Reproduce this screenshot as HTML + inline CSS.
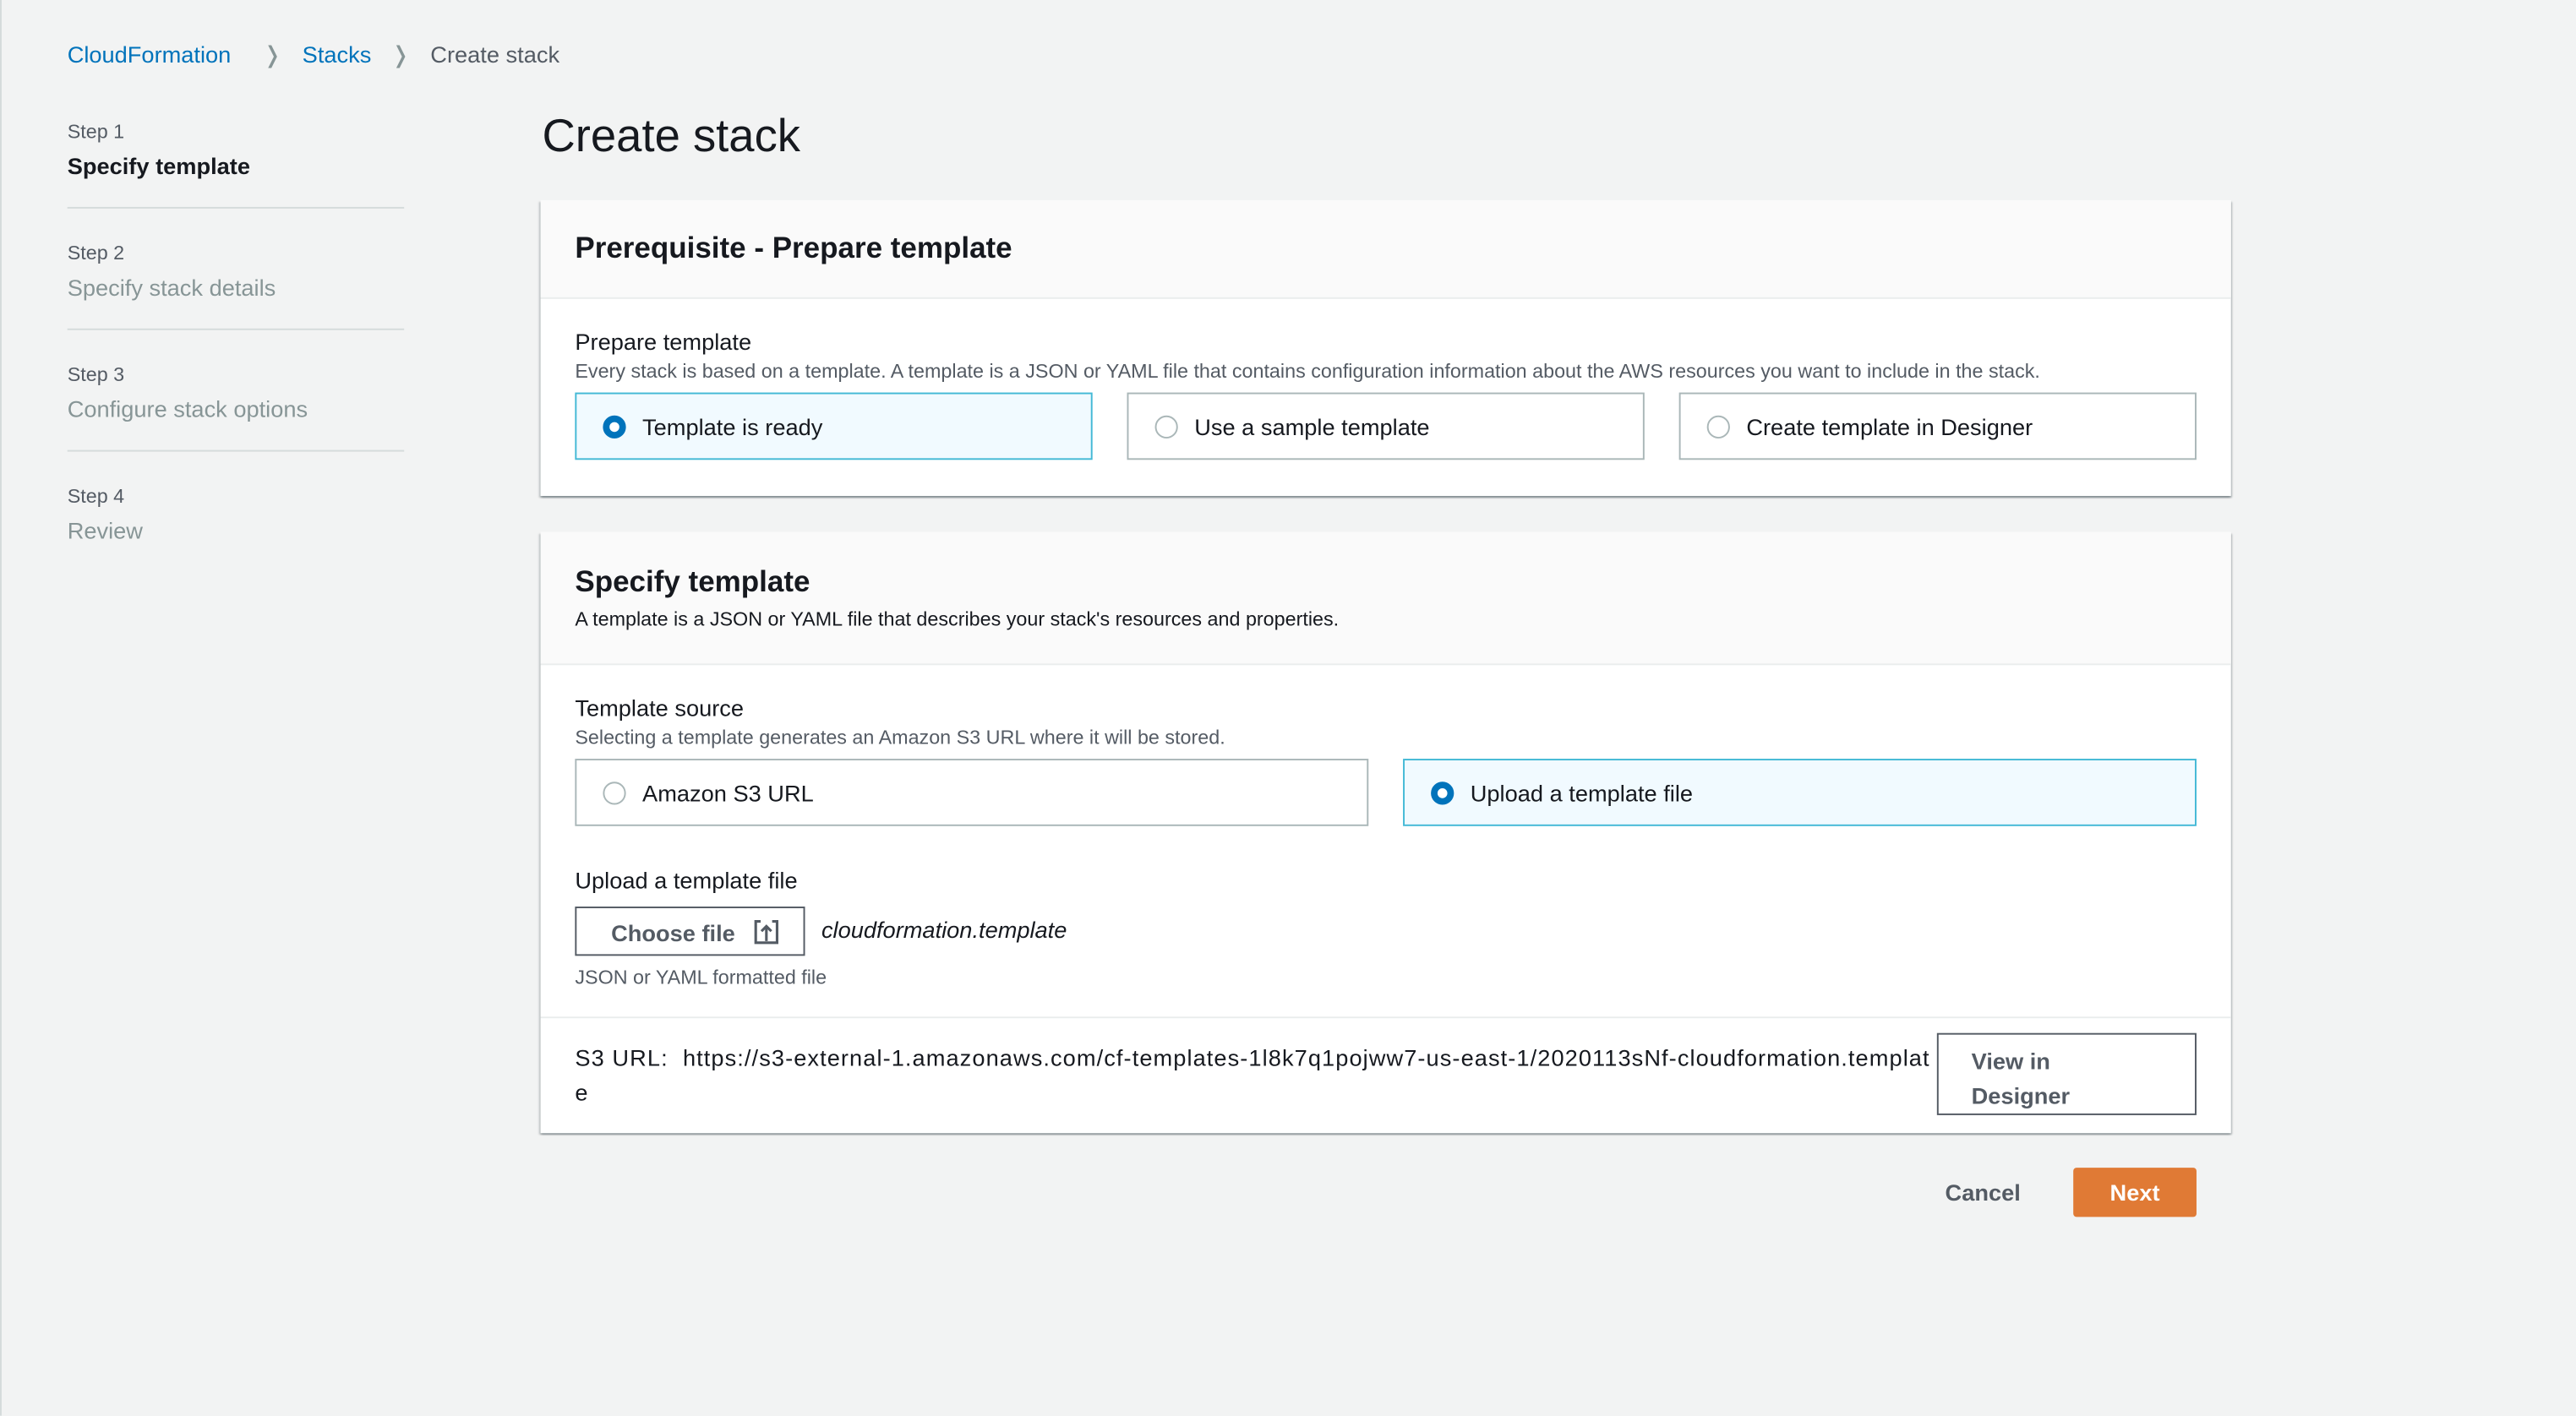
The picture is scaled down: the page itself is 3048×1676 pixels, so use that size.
<!DOCTYPE html>
<html><head><meta charset="utf-8"><style>
html,body{margin:0;padding:0;width:3048px;height:1674px;overflow:hidden;background:#f2f3f3}
#w{position:absolute;left:0;top:0;width:1568px;height:862px;transform:scale(1.94388);transform-origin:0 0;font-family:"Liberation Sans",sans-serif;color:#16191f}
#lb{position:absolute;left:0;top:0;width:1px;height:862px;background:#d5dbdb}
.a{position:absolute;white-space:nowrap}
.bc{font-size:14px;top:25px}
.blue{color:#0073bb}
.sl{font-size:12px;color:#545b64;left:41px}
.sn{font-size:14px;color:#879596;left:41px}
.dv{position:absolute;left:41px;width:205px;height:1px;background:#d5dbdb}
.panel{position:absolute;left:329px;width:1029px;background:#fff;box-shadow:0 1px 1px 0 rgba(0,28,36,.3),1px 1px 1px 0 rgba(0,28,36,.15),-1px 1px 1px 0 rgba(0,28,36,.15)}
.hd{position:absolute;left:0;top:0;width:100%;background:#fafafa;border-bottom:1px solid #eaeded}
.tile{position:absolute;height:41px;border:1px solid #aab7b8;box-sizing:border-box;font-size:14px}
.tile.on{border-color:#44b9d6;background:#f1faff}
.tile span{position:absolute;left:40px;top:12px}
.rd{position:absolute;left:16px;top:13px;width:14px;height:14px;border-radius:50%;border:1px solid #aab7b8;box-sizing:border-box;background:#fff}
.on .rd{border:4px solid #0073bb}
.btn{position:absolute;border:1px solid #545b64;box-sizing:border-box;font-weight:bold;color:#545b64;font-size:14px;background:#fff}
</style></head><body><div id="w">
<div id="lb"></div>
<div class="a bc blue" style="left:41px">CloudFormation</div>
<div class="a bc" style="left:160px;color:#879596">&#x276D;</div>
<div class="a bc blue" style="left:184px">Stacks</div>
<div class="a bc" style="left:238px;color:#879596">&#x276D;</div>
<div class="a bc" style="left:262px;color:#545b64">Create stack</div>

<div class="a sl" style="top:73px">Step 1</div>
<div class="a" style="left:41px;top:93px;font-size:14px;font-weight:bold">Specify template</div>
<div class="dv" style="top:126px"></div>
<div class="a sl" style="top:147px">Step 2</div>
<div class="a sn" style="top:167px">Specify stack details</div>
<div class="dv" style="top:200px"></div>
<div class="a sl" style="top:221px">Step 3</div>
<div class="a sn" style="top:241px">Configure stack options</div>
<div class="dv" style="top:274px"></div>
<div class="a sl" style="top:295px">Step 4</div>
<div class="a sn" style="top:315px">Review</div>

<div class="a" style="left:330px;top:67px;font-size:28px">Create stack</div>

<div class="panel" style="top:122px;height:180px">
 <div class="hd" style="height:59px"></div>
 <div class="a" style="left:21px;top:19px;font-size:18px;font-weight:bold">Prerequisite - Prepare template</div>
 <div class="a" style="left:21px;top:78px;font-size:14px">Prepare template</div>
 <div class="a" style="left:21px;top:97px;font-size:12px;color:#545b64">Every stack is based on a template. A template is a JSON or YAML file that contains configuration information about the AWS resources you want to include in the stack.</div>
 <div class="tile on" style="left:21px;top:117px;width:315px"><div class="rd"></div><span>Template is ready</span></div>
 <div class="tile" style="left:357px;top:117px;width:315px"><div class="rd"></div><span>Use a sample template</span></div>
 <div class="tile" style="left:693px;top:117px;width:315px"><div class="rd"></div><span>Create template in Designer</span></div>
</div>

<div class="panel" style="top:324px;height:366px">
 <div class="hd" style="height:80px"></div>
 <div class="a" style="left:21px;top:20px;font-size:18px;font-weight:bold">Specify template</div>
 <div class="a" style="left:21px;top:46px;font-size:12px">A template is a JSON or YAML file that describes your stack's resources and properties.</div>
 <div class="a" style="left:21px;top:99px;font-size:14px">Template source</div>
 <div class="a" style="left:21px;top:118px;font-size:12px;color:#545b64">Selecting a template generates an Amazon S3 URL where it will be stored.</div>
 <div class="tile" style="left:21px;top:138px;width:483px"><div class="rd"></div><span>Amazon S3 URL</span></div>
 <div class="tile on" style="left:525px;top:138px;width:483px"><div class="rd"></div><span>Upload a template file</span></div>
 <div class="a" style="left:21px;top:204px;font-size:14px">Upload a template file</div>
 <div class="btn" style="left:21px;top:228px;width:140px;height:30px"><span class="a" style="left:21px;top:7px">Choose file</span>
  <svg class="a" style="left:108px;top:7px" width="15" height="15" viewBox="0 0 15 15" fill="none" stroke="#545b64" stroke-width="1.6"><path d="M4 1H1v13h13V1h-3M7.5 13V4M4.5 7l3-3 3 3"/></svg></div>
 <div class="a" style="left:171px;top:234px;font-size:14px;font-style:italic">cloudformation.template</div>
 <div class="a" style="left:21px;top:264px;font-size:12px;color:#545b64">JSON or YAML formatted file</div>
 <div class="a" style="left:0;top:295px;width:100%;height:1px;background:#eaeded"></div>
 <div class="a" style="left:21px;top:312px;font-size:14px;letter-spacing:0.55px">S3 URL:&nbsp; https://s3-external-1.amazonaws.com/cf-templates-1l8k7q1pojww7-us-east-1/2020113sNf-cloudformation.templat</div>
 <div class="a" style="left:21px;top:333px;font-size:14px">e</div>
 <div class="btn" style="left:850px;top:305px;width:158px;height:50px"><span class="a" style="left:20px;top:6px;line-height:21px;white-space:normal">View in<br>Designer</span></div>
</div>

<div class="a" style="left:1184px;top:718px;font-size:14px;font-weight:bold;color:#545b64">Cancel</div>
<div class="a" style="left:1262px;top:711px;width:75px;height:30px;background:#e07a35;border-radius:2px;color:#fff;font-size:14px;font-weight:bold;text-align:center;line-height:30px">Next</div>
</div></body></html>
